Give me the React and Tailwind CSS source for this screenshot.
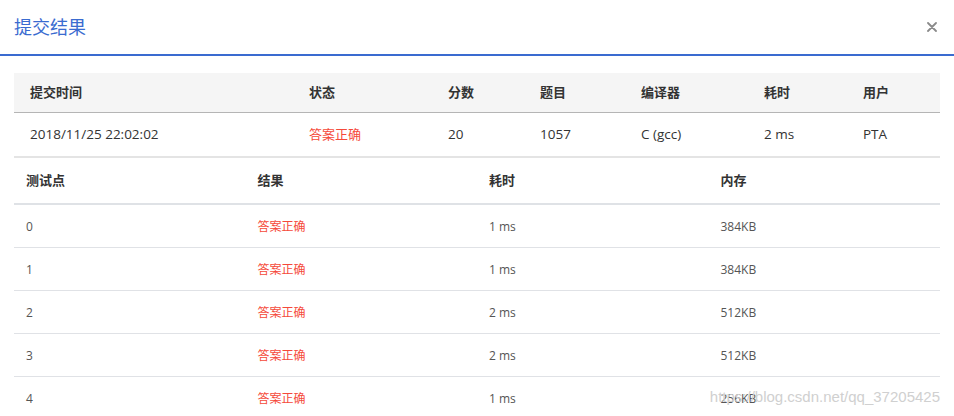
const font = { fontFamily: '"Open Sans", "Noto Sans CJK SC", sans-serif' };

const summaryCols = [
  { label: '提交时间', value: '2018/11/25 22:02:02', w: 'w-[279px]' },
  { label: '状态', value: '答案正确', w: 'w-[139px]', red: true },
  { label: '分数', value: '20', w: 'w-[92px]' },
  { label: '题目', value: '1057', w: 'w-[101px]' },
  { label: '编译器', value: 'C (gcc)', w: 'w-[123px]' },
  { label: '耗时', value: '2 ms', w: 'w-[99px]' },
  { label: '用户', value: 'PTA', w: 'flex-1' },
];

const cases = [
  ['0', '1 ms', '384KB'],
  ['1', '1 ms', '384KB'],
  ['2', '2 ms', '512KB'],
  ['3', '2 ms', '512KB'],
  ['4', '1 ms', '256KB'],
];

export default function App() {
  return (
    <div className="w-[954px] h-[416px] overflow-hidden bg-white relative" style={font}>
      {/* header */}
      <div className="h-[56px] flex items-center justify-between pl-[14px] pr-[17px] border-b-2 border-[#3a6bd0]">
        <h2 className="text-[18px] text-[#3a6bd0] font-normal">提交结果</h2>
        <button className="w-[10px] h-[10px] flex items-center justify-center">
          <svg width="10" height="10" viewBox="0 0 10 10">
            <path d="M1 1L9 9M9 1L1 9" stroke="#8a8a8a" strokeWidth="1.8" strokeLinecap="round" />
          </svg>
        </button>
      </div>

      <div className="px-[14px] pt-[17px]">
        {/* summary table */}
        <div className="flex h-[40px] items-center bg-[#f5f5f5] border-b border-[#b5b5b5]">
          {summaryCols.map((c) => (
            <div key={c.label} className={`${c.w} pl-4 text-[13px] font-bold text-[#333]`}>
              {c.label}
            </div>
          ))}
        </div>
        <div className="flex h-[45px] items-center border-b-2 border-[#e4e4e4]">
          {summaryCols.map((c) => (
            <div
              key={c.label}
              className={`${c.w} pl-4 ${c.red ? 'text-[13px] text-[#f5493a]' : 'text-[13.5px] text-[#333]'}`}
            >
              {c.value}
            </div>
          ))}
        </div>

        {/* test cases */}
        <div className="grid grid-cols-4 h-[47px] items-center border-b-2 border-[#dfe2e6]">
          {['测试点', '结果', '耗时', '内存'].map((h) => (
            <div key={h} className="pl-3 text-[13px] font-bold text-[#333]">{h}</div>
          ))}
        </div>
        {cases.map(([id, time, mem]) => (
          <div key={id} className="grid grid-cols-4 h-[43px] items-center pt-[2px] border-b border-[#e0e2e6]">
            <div className="pl-3 text-[12px] text-[#555]">{id}</div>
            <div className="pl-3 text-[12px] text-[#f5493a]">答案正确</div>
            <div className="pl-3 text-[12px] text-[#555]">{time}</div>
            <div className="pl-3 text-[12px] text-[#555]">{mem}</div>
          </div>
        ))}
      </div>

      <div className="absolute right-[14px] top-[386px] text-[15px] text-[#d0d0d0] font-['Liberation_Sans'] pointer-events-none">
        https://blog.csdn.net/qq_37205425
      </div>
    </div>
  );
}
